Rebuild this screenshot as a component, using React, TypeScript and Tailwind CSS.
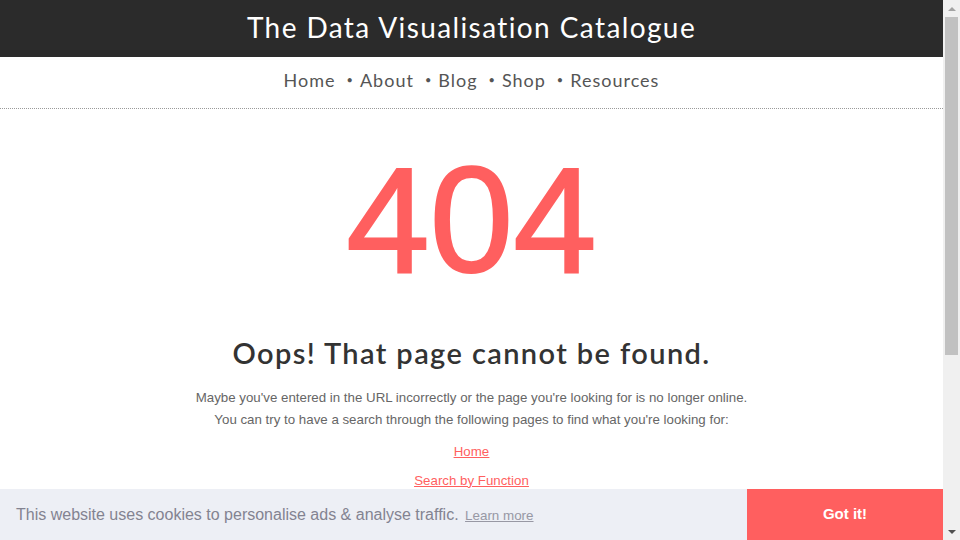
import React from "react";

const NAV = ["Home", "About", "Blog", "Shop", "Resources"];

function Scrollbar() {
  return (
    <div className="flex w-[17px] shrink-0 flex-col bg-[#f0f0f0]">
      <div className="flex h-[17px] items-center justify-center">
        <div className="h-0 w-0 border-x-[4px] border-b-[4px] border-x-transparent border-b-[#a3a3a3]" />
      </div>
      <div className="mx-[2px] h-[338px] bg-[#c1c1c1]" />
      <div className="flex-1" />
      <div className="flex h-[17px] items-center justify-center">
        <div className="h-0 w-0 border-x-[4px] border-t-[4px] border-x-transparent border-t-[#505050]" />
      </div>
    </div>
  );
}

export default function App() {
  const display = { fontFamily: "Lato, 'Noto Sans', sans-serif" };
  const arial = { fontFamily: "'Liberation Sans', Arial, sans-serif" };

  return (
    <div className="relative flex h-[540px] w-[960px] overflow-hidden bg-white">
      <main className="flex min-w-0 flex-1 flex-col">
        <header className="flex h-[57px] items-center justify-center bg-[#2b2b2b] pb-[4px]">
          <h1 className="text-[28px] tracking-[1.4px] text-white" style={display}>
            The Data Visualisation Catalogue
          </h1>
        </header>
        <nav className="flex h-[52px] items-center justify-center border-b border-dotted border-[#9a9a9a] pb-[4px] text-[18px] tracking-[1px] text-[#555]" style={display}>
          {NAV.map((item, i) => (
            <span key={item} className="flex items-center">
              {i > 0 && <span className="ml-[11px] mr-[6px] text-[11px]">•</span>}
              {item}
            </span>
          ))}
        </nav>

        <section className="flex flex-col items-center">
          <div className="mt-[26px] h-[170px] text-[150px] leading-[170px] text-[#ff5f5f]" style={{ ...arial, WebkitTextStroke: "2px #ff5f5f" }}>
            404
          </div>
          <h2 className="mt-[26px] text-[29px] font-semibold tracking-[1.4px] text-[#333]" style={display}>
            Oops! That page cannot be found.
          </h2>
          <div className="mt-[12px] text-center text-[13.3px] leading-[22px] text-[#666]" style={arial}>
            <p>Maybe you've entered in the URL incorrectly or the page you're looking for is no longer online.</p>
            <p>You can try to have a search through the following pages to find what you're looking for:</p>
          </div>
          <div className="mt-[12px] flex flex-col items-center gap-[11px] text-[13.3px] leading-[18px] text-[#ff5f5f] underline" style={arial}>
            <a href="#">Home</a>
            <a href="#">Search by Function</a>
          </div>
        </section>
      </main>
      <Scrollbar />

      <div className="absolute bottom-0 left-0 flex h-[51px] w-[943px] items-center bg-[#edeff5]" style={arial}>
        <p className="flex-1 pl-[16px] text-[16px] text-[#838391]">
          This website uses cookies to personalise ads &amp; analyse traffic.{" "}
          <a href="#" className="ml-[2px] text-[13.4px] underline opacity-80">Learn more</a>
        </p>
        <button className="h-full w-[196px] bg-[#ff5f5f] text-[15px] font-bold text-white">Got it!</button>
      </div>
    </div>
  );
}
